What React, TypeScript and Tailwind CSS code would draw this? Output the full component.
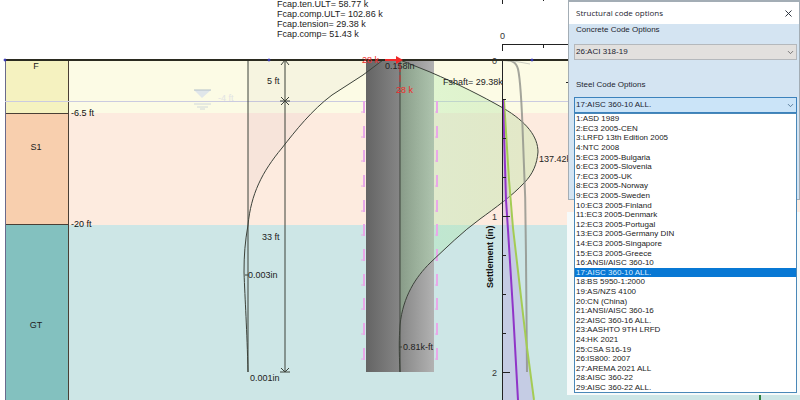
import React, { useState } from "react";
import { ChevronDown, X } from "lucide-react";

const concreteCodes = ["25:ACI 318-14", "26:ACI 318-19"];

const steelCodes = [
  "1:ASD 1989",
  "2:EC3 2005-CEN",
  "3:LRFD 13th Edition 2005",
  "4:NTC 2008",
  "5:EC3 2005-Bulgaria",
  "6:EC3 2005-Slovenia",
  "7:EC3 2005-UK",
  "8:EC3 2005-Norway",
  "9:EC3 2005-Sweden",
  "10:EC3 2005-Finland",
  "11:EC3 2005-Denmark",
  "12:EC3 2005-Portugal",
  "13:EC3 2005-Germany DIN",
  "14:EC3 2005-Singapore",
  "15:EC3 2005-Greece",
  "16:ANSI/AISC 360-10",
  "17:AISC 360-10 ALL.",
  "18:BS 5950-1:2000",
  "19:AS/NZS 4100",
  "20:CN (China)",
  "21:ANSI/AISC 360-16",
  "22:AISC 360-16 ALL.",
  "23:AASHTO 9TH LRFD",
  "24:HK 2021",
  "25:CSA S16-19",
  "26:IS800: 2007",
  "27:AREMA 2021 ALL",
  "28:AISC 360-22",
  "29:AISC 360-22 ALL.",
];

const capacities = [
  "Fcap.ten.ULT= 58.77 k",
  "Fcap.comp.ULT= 102.86 k",
  "Fcap.tension= 29.38 k",
  "Fcap.comp= 51.43 k",
];

// tops of the skin friction arrows along the pile
const frictionMarks = [101, 126, 150, 175, 200, 224, 249, 274, 298, 323, 348];

const settlementTicks = [
  { y: 99, len: 4 },
  { y: 138, len: 4 },
  { y: 177, len: 4 },
  { y: 216, len: 8 },
  { y: 255, len: 4 },
  { y: 294, len: 4 },
  { y: 333, len: 4 },
  { y: 372, len: 8 },
];

const momentCurve =
  "M400 60L430 72C458 84 482 96 503 108C527 122 538 137 538 152C537 164 533 174 524 183C512 196 495 208 480 219C462 232 446 248 430 263C416 277 403 296 400 325";

const deflectionCurve =
  "M383 60L363 75L332 95C312 110 296 130 282 148C262 172 251 194 248 225C245 242 244 255 244 272C245 300 247 330 248 372";

const Soil = () => (
  <g>
    <rect x="68" y="60" width="732" height="53" fill="#fcfbe5" />
    <rect x="68" y="113" width="732" height="112" fill="#fdebdf" />
    <rect x="68" y="225" width="732" height="175" fill="#cde6e6" />
    <rect x="5" y="60" width="63" height="53" fill="#f5f2c0" />
    <rect x="5" y="113" width="63" height="112" fill="#f8cfae" />
    <rect x="5" y="225" width="63" height="175" fill="#83c1bf" />
    <g stroke="#4a3f35" shapeRendering="crispEdges">
      <path d="M5 113H68M5 224H68M68 60V400" />
      <path d="M5 60V400" stroke="#6a6a8c" />
    </g>
    <path d="M5 101H568" stroke="#cbcbe0" shapeRendering="crispEdges" />
    <g fill="#222" textAnchor="middle">
      <text x="36" y="69">F</text>
      <text x="36" y="150">S1</text>
      <text x="36" y="328">GT</text>
    </g>
    <g fill="#111">
      <text x="71" y="116">-6.5 ft</text>
      <text x="71" y="227">-20 ft</text>
    </g>
    <path d="M194 90H211L202 98Z" fill="#e0e6ea" />
    <path d="M194 90H211" stroke="#b4c0c8" />
    <path d="M194 104H211M197 107H208M200 109H205" stroke="#d0d8da" />
    <text x="218" y="101" fill="#e2e3e4">-4 ft</text>
  </g>
);

const Pile = () => (
  <g>
    <defs>
      <linearGradient id="pile" x1="0" x2="1">
        <stop offset="0" stopColor="#646464" />
        <stop offset="0.5" stopColor="#868686" />
        <stop offset="1" stopColor="#b2b2b2" />
      </linearGradient>
      <linearGradient id="moment" x1="0" x2="1">
        <stop offset="0" stopColor="#90ee90" stopOpacity="0.2" />
        <stop offset="0.25" stopColor="#a4e8a4" stopOpacity="0.32" />
        <stop offset="1" stopColor="#cce4b0" stopOpacity="0.5" />
      </linearGradient>
    </defs>
    <path d={`${deflectionCurve} V60 Z`} fill="#705070" fillOpacity="0.04" />
    <rect x="366" y="60" width="68" height="312" fill="url(#pile)" />
    <path d={`${momentCurve} Z`} fill="url(#moment)" />
    {frictionMarks.map((y) => (
      <g key={y} stroke="#e8a8e8" fill="none">
        <path d={`M364 ${y}V${y + 12}`} strokeWidth="2" />
        <path d={`M361 ${y + 11}H364`} />
        <path d={`M437 ${y}V${y + 12}`} strokeWidth="2" />
        <path d={`M435 ${y + 11}H437`} />
      </g>
    ))}
    <g stroke="#3c423a" fill="none">
      <path d="M400 60V372" />
      <path d={momentCurve} />
      <path d="M400 325C399 340 399 350 400 372M399 347H402" />
      <path d="M248 60V372" />
      <path d={deflectionCurve} />
      <path d="M245 275H248" />
      <path d="M285 60V372M281 65L285 60L289 65M280 101H290M281 97L289 105M281 105L289 97M280 372H290M281 368L285 372L289 368" />
    </g>
  </g>
);

const SettlementPlot = () => (
  <g>
    <path d="M503 100L508 190L513 228L526 345L534 400H503Z" fill="#b89ae0" fillOpacity="0.35" />
    <g fill="none">
      <path
        d="M503 60C512 60 516 62 518 69C521 82 522 110 523 140C525 180 526 220 526 260L527 372"
        stroke="#8d9088"
        strokeWidth="2"
        strokeOpacity="0.8"
      />
      <path d="M508 60L530 64" stroke="#c9cbc0" />
      <path d="M504 100L509 180L513 228L526 340L534 400" stroke="#a4cc54" strokeWidth="2" />
      <path d="M503 100L506 200L508 230L513 310L518 400" stroke="#9034c8" strokeWidth="2" />
    </g>
    <g stroke="#222" shapeRendering="crispEdges">
      <path d="M502 60V400M502 51V44H568M543 44V48M502 0V4M543 0V1M566 82H568" fill="none" />
      {settlementTicks.map((t) => (
        <path key={t.y} d={`M502 ${t.y}h${t.len}`} />
      ))}
    </g>
    <g fill="#333">
      <text x="500" y="39">0</text>
      <text x="492" y="64">0</text>
      <text x="492" y="220">1</text>
      <text x="492" y="376">2</text>
    </g>
    <text transform="translate(493 288) rotate(-90)" fontWeight="700" fill="#111">
      Settlement (in)
    </text>
  </g>
);

const PileDrawing = () => (
  <svg
    viewBox="0 0 800 400"
    className="block h-auto w-full text-[9px]"
    role="img"
    aria-label="Pile section with soil layers and settlement plot"
  >
    <Soil />
    <Pile />
    <SettlementPlot />
    <path d="M5 60H568" stroke="#2b2b20" strokeWidth="2" />
    <g fill="#5050d8" stroke="#3030b0">
      <circle cx="5" cy="60" r="1" />
      <circle cx="269" cy="60" r="1" />
      <circle cx="532" cy="60" r="1" />
    </g>
    <g fill="#222">
      {capacities.map((line, i) => (
        <text key={line} x="277" y={7 + i * 10}>
          {line}
        </text>
      ))}
      <text x="267" y="84">5 ft</text>
      <text x="262" y="240">33 ft</text>
      <text x="248" y="278">0.003in</text>
      <text x="250" y="381">0.001in</text>
      <text x="385" y="69">0.158in</text>
      <text x="403" y="350">0.81k-ft</text>
      <text x="443" y="85">Fshaft= 29.38k</text>
      <text x="539" y="162">137.42k</text>
    </g>
    <g fill="#f02828">
      <text x="362" y="63">28 k</text>
      <text x="396" y="93">28 k</text>
      <path d="M396 56L403 60L396 64Z" />
      <path d="M385 60H398" stroke="#f02828" strokeWidth="2" />
      <path d="M400 64V82" stroke="#d83030" strokeDasharray="8 3" />
    </g>
    <rect x="567" y="212" width="233" height="183" fill="#f6fafa" />
    <path d="M760 395V400" stroke="#2f8040" strokeWidth="2" />
  </svg>
);

const CodeOptions = () => {
  const [concrete, setConcrete] = useState("26:ACI 318-19");
  const [steel, setSteel] = useState("17:AISC 360-10 ALL.");

  return (
    <div
      role="dialog"
      aria-labelledby="options-title"
      className="absolute top-0 right-0 h-[200px] w-[232px] border border-t-2 border-[#a3adb5] bg-[#d4e4f2] text-[8px] text-[#1c2430]"
    >
      <div className="flex h-[22px] items-center justify-between bg-white px-[5px]">
        <h1 id="options-title" className="pl-[2px] font-['Open_Sans',sans-serif]">
          Structural code options
        </h1>
        <button type="button" aria-label="Close">
          <X size={11} strokeWidth={2} />
        </button>
      </div>

      <div className="flex flex-col pr-[2px] pl-[5px]">
        <label htmlFor="concrete" className="pl-[2px] leading-[12px]">
          Concrete Code Options
        </label>
        <div className="relative mt-2">
          <select
            id="concrete"
            value={concrete}
            onChange={(e) => setConcrete(e.target.value)}
            className="block h-4 w-full appearance-none border border-[#b4b8bc] bg-[#e2e0de] pl-px leading-[12px]"
          >
            {concreteCodes.map((code) => (
              <option key={code}>{code}</option>
            ))}
          </select>
          <ChevronDown size={9} className="pointer-events-none absolute top-1 right-[2px] text-[#555]" />
        </div>

        <label htmlFor="steel" className="mt-[19px] pl-[2px] leading-[12px]">
          Steel Code Options
        </label>
        <div className="relative mt-[6px]">
          <select
            id="steel"
            value={steel}
            onChange={(e) => setSteel(e.target.value)}
            className="block h-4 w-full appearance-none border border-[#3c82bc] bg-[#cbe4f8] pl-px leading-[12px]"
          >
            {steelCodes.map((code) => (
              <option key={code}>{code}</option>
            ))}
          </select>
          <ChevronDown size={9} className="pointer-events-none absolute top-1 right-[2px] text-[#3b6080]" />

          <ul
            role="listbox"
            aria-label="Steel codes"
            className="absolute top-full right-0 left-0 flex h-[280px] flex-col border border-[#4a88b8] bg-white leading-[9px] text-[#222]"
          >
            {steelCodes.map((code) => (
              <li
                key={code}
                role="option"
                aria-selected={code === steel}
                onClick={() => setSteel(code)}
                className={`flex flex-1 cursor-default items-center pl-px ${
                  code === steel ? "bg-[#0878d4] text-[#d8ecff]" : ""
                }`}
              >
                {code}
              </li>
            ))}
          </ul>
        </div>
      </div>
    </div>
  );
};

const App = () => {
  return (
    <main className="relative min-h-screen overflow-hidden bg-white font-['Liberation_Sans',Arial,sans-serif]">
      <PileDrawing />
      <CodeOptions />
    </main>
  );
};

export default App;
